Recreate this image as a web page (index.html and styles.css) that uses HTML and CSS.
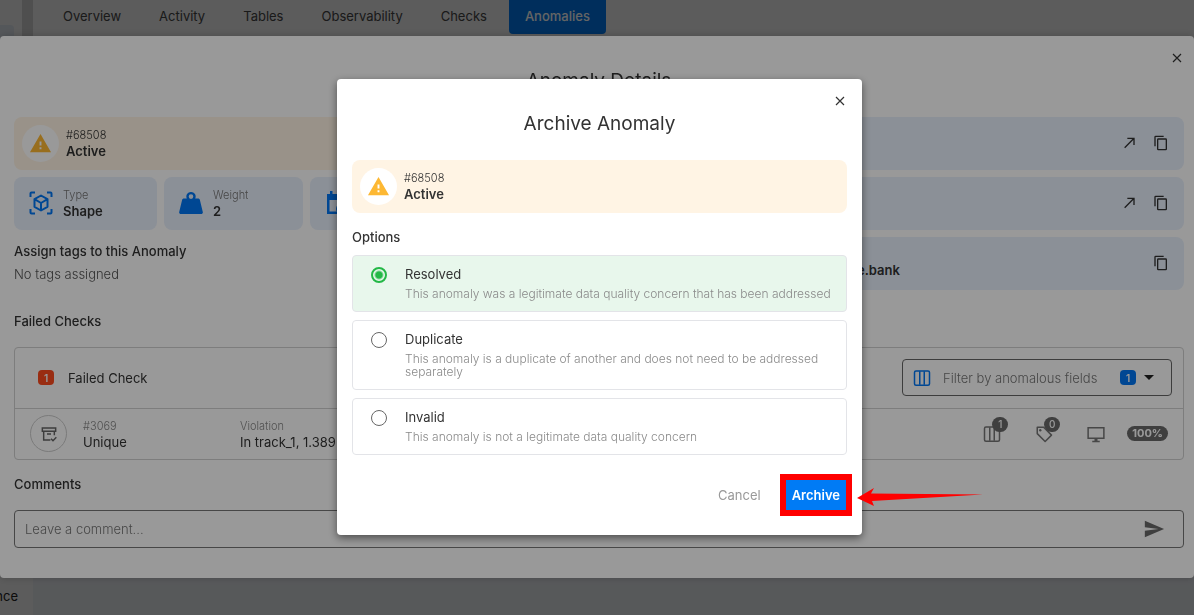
FILE: index.html
```html
<!DOCTYPE html>
<html lang="en">
<head>
<meta charset="utf-8">
<title>Archive Anomaly</title>
<link rel="stylesheet" href="styles.css">
</head>
<body>
<svg class="sprite" aria-hidden="true">
  <symbol id="i-close" viewBox="0 0 24 24"><path d="M4 4l16 16M20 4L4 20" fill="none" stroke="currentColor" stroke-width="2.4"/></symbol>
  <symbol id="i-warn" viewBox="0 0 24 24"><path fill="currentColor" d="M1 21h22L12 2zM13 18h-2v-2h2zM13 14h-2v-4h2z" fill-rule="evenodd"/></symbol>
  <symbol id="i-copy" viewBox="0 0 24 24"><path fill="currentColor" d="M19 21H8V7h11m0-2H8a2 2 0 0 0-2 2v14a2 2 0 0 0 2 2h11a2 2 0 0 0 2-2V7a2 2 0 0 0-2-2m-3-4H4a2 2 0 0 0-2 2v14h2V3h12z"/></symbol>
  <symbol id="i-out" viewBox="0 0 24 24"><path fill="none" stroke="currentColor" stroke-width="2" d="M4 19L18 5M8 5h10v10"/></symbol>
  <symbol id="i-cols" viewBox="0 0 24 24"><g fill="none" stroke="currentColor" stroke-width="2"><rect x="2" y="2.500" width="20" height="19" rx="2"/><path d="M9 3v18M15 3v18"/></g></symbol>
</svg>

<div class="app">
  <aside class="side"><span class="side-item"></span><span class="side-text">Reference</span></aside>
  <main class="main">
    <nav class="tabs">
      <a href="#">Overview</a><a href="#">Activity</a><a href="#">Tables</a><a href="#">Observability</a><a href="#">Checks</a><a href="#" class="on">Anomalies</a>
    </nav>
  </main>
</div>

<div class="scrim scrim-page">
  <section class="dialog details" aria-label="Anomaly Details">
    <button class="close" aria-label="Close details"><svg><use href="#i-close"/></svg></button>
    <h2 class="title">Anomaly Details</h2>
    <div class="cards">
      <div class="col">
        <div class="card warn">
          <span class="disc"><svg><use href="#i-warn"/></svg></span>
          <div class="pair"><small>#68508</small><strong>Active</strong></div>
        </div>
        <div class="facts">
          <div class="card fact">
            <svg viewBox="0 0 24 24"><g fill="none" stroke="currentColor" stroke-width="2"><path d="M1.500 6V2.500a1 1 0 0 1 1-1H6M18 1.500h3.500a1 1 0 0 1 1 1V6M22.500 18v3.500a1 1 0 0 1-1 1H18M6 22.500H2.500a1 1 0 0 1-1-1V18"/><path d="M12 4.500l6.500 3.700v7.600L12 19.500l-6.500-3.700V8.200zM5.500 8.200L12 12l6.500-3.800M12 12v7.500" stroke-linejoin="round"/></g></svg>
            <div class="pair"><small>Type</small><strong>Shape</strong></div>
          </div>
          <div class="card fact">
            <svg viewBox="0 0 24 24"><path fill="currentColor" fill-rule="evenodd" d="M12 1a4.500 4.500 0 0 1 4.200 6.500H19c1 0 1.700.6 1.900 1.400L23.800 21c.3 1-.5 2-1.600 2H1.800C.7 23-.1 22 .2 21L3.100 8.900C3.300 8.100 4 7.500 5 7.500h2.800A4.500 4.500 0 0 1 12 1zm0 2.300a2.300 2.300 0 1 0 0 4.600 2.300 2.300 0 0 0 0-4.600z"/></svg>
            <div class="pair"><small>Weight</small><strong>2</strong></div>
          </div>
          <div class="card fact wide">
            <svg viewBox="0 0 24 24"><path fill="currentColor" d="M2 3h3V0h2.500v3h9V0H19v3h3v9h-2.500V9h-15v11.500H12V23H2z"/><circle cx="17" cy="18" r="5" fill="none" stroke="currentColor" stroke-width="2"/></svg>
          </div>
        </div>
        <h3>Assign tags to this Anomaly</h3>
        <p class="none">No tags assigned</p>
      </div>
      <div class="col">
        <div class="card source"><button aria-label="Open datastore"><svg><use href="#i-out"/></svg></button><button aria-label="Copy datastore"><svg><use href="#i-copy"/></svg></button></div>
        <div class="card source"><button aria-label="Open table"><svg><use href="#i-out"/></svg></button><button aria-label="Copy table"><svg><use href="#i-copy"/></svg></button></div>
        <div class="card source"><strong class="loc">finance.bank</strong><button aria-label="Copy location"><svg><use href="#i-copy"/></svg></button></div>
      </div>
    </div>

    <h3>Failed Checks</h3>
    <div class="checks">
      <div class="checks-head">
        <span class="num red">1</span><span class="grow">Failed Check</span>
        <button class="filter"><svg><use href="#i-cols"/></svg><span class="grow">Filter by anomalous fields</span><span class="num blue">1</span><i class="caret"></i></button>
      </div>
      <div class="check">
        <span class="ring"><svg viewBox="0 0 24 24"><g fill="none" stroke="currentColor" stroke-width="2.200"><path d="M2 3h20v5H2zM4 8v13h10M20 8v6M9 12h6M15 19l3 3 5-5"/></g></svg></span>
        <div class="pair id"><small>#3069</small><span>Unique</span></div>
        <div class="pair grow"><small>Violation</small><span>In track_1, 1.389%</span></div>
        <div class="marks">
          <span class="mark"><svg><use href="#i-cols"/></svg><b>1</b></span>
          <span class="mark"><svg viewBox="0 0 24 24"><path fill="none" stroke="currentColor" stroke-width="2" stroke-linejoin="round" d="M3 3h8.500L22 13.500 13.500 22 3 11.500z"/><circle cx="7" cy="7" r="1.600" fill="currentColor"/></svg><b>0</b></span>
          <span class="mark"><svg viewBox="0 0 24 24"><path fill="none" stroke="currentColor" stroke-width="2" d="M1.500 3.500h21v14h-21z"/><path fill="currentColor" d="M10 18h4v3h3v2H7v-2h3z"/></svg></span>
          <span class="pct">100%</span>
        </div>
      </div>
    </div>

    <h3><label for="comment">Comments</label></h3>
    <div class="comment">
      <input id="comment" type="text" placeholder="Leave a comment...">
      <button aria-label="Send"><svg viewBox="0 0 24 24"><path fill="currentColor" d="M2 21l21-9L2 3v7l15 2-15 2z"/></svg></button>
    </div>
  </section>
</div>

<div class="scrim scrim-top">
  <form class="dialog archive" role="dialog" aria-labelledby="archive-title">
    <button type="button" class="close" aria-label="Close"><svg><use href="#i-close"/></svg></button>
    <h2 class="title" id="archive-title">Archive Anomaly</h2>
    <div class="card warn">
      <span class="disc"><svg><use href="#i-warn"/></svg></span>
      <div class="pair"><small>#68508</small><strong>Active</strong></div>
    </div>
    <h3>Options</h3>
    <div class="options">
      <label class="option"><input type="radio" name="reason" checked><span><b>Resolved</b><small>This anomaly was a legitimate data quality concern that has been addressed</small></span></label>
      <label class="option"><input type="radio" name="reason"><span><b>Duplicate</b><small>This anomaly is a duplicate of another and does not need to be addressed separately</small></span></label>
      <label class="option"><input type="radio" name="reason"><span><b>Invalid</b><small>This anomaly is not a legitimate data quality concern</small></span></label>
    </div>
    <div class="actions">
      <button type="button" class="cancel">Cancel</button>
      <span class="target"><button type="button" class="go">Archive</button>
        <svg class="arrow" viewBox="0 0 126 18"><path fill="#f00" d="M0 10L17 0l-3 5.500L126 6.500 15 13l2 5z"/></svg></span>
    </div>
  </form>
</div>
</body>
</html>
```
FILE: styles.css
```css
* { box-sizing: border-box; }
body {
  margin: 0;
  font: 400 13px/16px Inter, "Open Sans", sans-serif;
  color: #333;
}
h2, h3, p { margin: 0; }
h3 { font-size: 13px; font-weight: 500; line-height: 16px; }
button { font: inherit; color: inherit; border: 0; background: none; padding: 0; display: flex; align-items: center; }
svg { display: block; width: 16px; height: 16px; flex: none; }
.sprite { position: absolute; width: 0; height: 0; }
.grow { flex: 1; text-align: left; }

.app { display: flex; height: 100vh; overflow: hidden; background: #e8e8e8; }
.side {
  width: 33px;
  display: flex;
  flex-direction: column;
  justify-content: space-between;
  align-items: flex-end;
  padding: 25px 4px 11px 0;
  border-right: 11px solid;
  border-image: linear-gradient(#c8c8c8 60%, #e8e8e8 60%) 1;
  overflow: hidden;
}
.side-item { width: 24px; height: 30px; margin-right: 4px; border-radius: 4px; background: #d6dce4; }
.side-text { color: #222; }
.main { flex: 1; background: linear-gradient(#e8e8e8 50%, #dee1e6 50%); }
.tabs { display: flex; padding-left: 14px; }
.tabs a {
  padding: 8px 16px 10px;
  margin-right: 6px;
  color: #444;
  text-decoration: none;
  border-radius: 0 0 4px 4px;
}
.tabs .on { background: #0077ea; color: #fff; font-weight: 500; }

.scrim { position: fixed; inset: 0; display: flex; align-items: center; justify-content: center; padding-bottom: 2px; }
.scrim-page { background: rgba(0, 0, 0, .34); }
.scrim-top { background: rgba(0, 0, 0, .4); padding-left: 5px; }
.dialog { display: flex; flex-direction: column; background: #fff; border-radius: 4px; }
.close { align-self: flex-end; width: 12px; height: 12px; margin-right: 1px; }
.close svg { width: 12px; height: 12px; }
.title { margin: 5px 0 24px; font-size: 19px; font-weight: 400; line-height: 24px; text-align: center; }

.details { width: 100%; padding: 16px 10px 30px 14px; box-shadow: 0 -2px 6px rgba(0, 0, 0, .1), 0 2px 6px rgba(0, 0, 0, .1); }

.card { display: flex; align-items: center; height: 53px; border-radius: 8px; background: #e8f0fc; }
.card.warn { background: #fff4e4; padding-left: 8px; gap: 7px; }
.disc { display: grid; place-items: center; width: 37px; height: 37px; border-radius: 50%; background: #fff; color: #fdb833; }
.disc svg { width: 23px; height: 23px; }
.pair { display: flex; flex-direction: column; padding-bottom: 1px; white-space: nowrap; }
.pair small { font-size: 11px; font-weight: 300; color: #777; }
.warn small { color: #333; }
strong { font-weight: 600; }

.cards { display: grid; grid-template-columns: 1fr 1fr; gap: 7px; margin-bottom: 23px; }
.col { display: flex; flex-direction: column; gap: 7px; min-width: 0; }
.col h3 { margin-top: 6px; }
.none { color: #555; font-weight: 300; }
.facts { display: flex; gap: 7px; }
.fact { width: 143px; padding-left: 15px; gap: 10px; }
.fact + .fact { width: 139px; }
.fact.wide { flex: 1; }
.fact svg { width: 24px; height: 24px; color: #0077f6; }
.source { justify-content: flex-end; gap: 15px; padding-right: 15px; color: #333; }
.loc { flex: 1; padding: 14px 0 0 215px; }

.checks { margin: 18px 0 16px; border: 1px solid #d0d0d0; border-radius: 4px; }
.checks-head { display: flex; align-items: center; gap: 14px; height: 61px; padding: 0 11px 0 23px; border-bottom: 1px solid #d0d0d0; }
.num { display: grid; place-items: center; width: 16px; height: 15px; border-radius: 4px; color: #fff; font-size: 10px; font-weight: 600; }
.red { background: #ff4b1f; }
.blue { background: #0077f6; }
.filter { width: 270px; height: 37px; padding: 0 17px 0 10px; border: 1px solid #666; border-radius: 4px; color: #777; font-weight: 300; }
.filter svg { width: 18px; height: 18px; margin-right: 12px; color: #0077f6; }
.caret { margin-left: 8px; border: 5px solid transparent; border-top-color: #222; border-bottom: 0; }
.check { display: flex; align-items: center; height: 50px; padding: 0 15px; }
.ring { display: grid; place-items: center; width: 37px; height: 37px; margin-right: 16px; border: 1px solid #ccc; border-radius: 50%; color: #666; }
.id { width: 157px; }
.check .pair { padding: 0; }
.check .pair small { color: #888; }
.marks { display: flex; align-items: center; gap: 34px; color: #777; }
.mark { position: relative; }
.mark svg { width: 18px; height: 18px; }
.mark b { position: absolute; left: 9px; top: -8px; width: 16px; height: 15px; border-radius: 8px; background: #6a6a6a; color: #fff; font-size: 10px; font-weight: 500; line-height: 15px; text-align: center; }
.pct { padding: 0 5px; margin-left: -12px; border-radius: 8px; background: #6a6a6a; color: #fff; font-size: 11px; line-height: 15px; font-weight: 700; }

.comment { display: flex; align-items: center; height: 38px; margin-top: 18px; padding: 0 18px 0 10px; border: 1px solid #777; border-radius: 4px; }
.comment input { flex: 1; border: 0; padding: 0; background: none; font: inherit; font-weight: 300; outline: 0; }
.comment input::placeholder { color: #777; }
.comment svg { width: 22px; height: 22px; color: #6a6a6a; }

.archive { width: 525px; padding: 16px 15px 25px; box-shadow: 0 3px 8px rgba(0, 0, 0, .5); }
.archive h3 { margin: 16px 0 10px; }
.options { display: flex; flex-direction: column; gap: 8px; }
.option { display: flex; padding: 8px 12px 11px 18px; border: 1px solid #e3e4e8; border-radius: 4px; }
.option:has(:checked) { background: #e8f7ec; }
.option span { display: flex; flex-direction: column; gap: 3px; }
.option b { font-weight: 400; line-height: 20px; }
.option small { font-size: 12px; line-height: 13px; font-weight: 300; color: #8a8a8a; }
.option input {
  appearance: none;
  flex: none;
  width: 16px;
  height: 16px;
  margin: 3px 18px 0 0;
  border: 1px solid #666;
  border-radius: 50%;
}
.option input:checked { border: 2px solid #24b847; background: radial-gradient(#24b847 3px, transparent 5px) padding-box; }
.actions { display: flex; justify-content: flex-end; align-items: center; gap: 25px; margin-top: 25px; padding-right: 1px; }
.cancel { color: #999; }
.target { position: relative; }
.go { height: 30px; padding: 0 6px; background: #007bf5; color: #fff; font-weight: 600; box-shadow: 0 0 0 6px #f00; }
.arrow { position: absolute; left: 100%; top: 8px; margin-left: 11px; width: 126px; height: 18px; }
```
